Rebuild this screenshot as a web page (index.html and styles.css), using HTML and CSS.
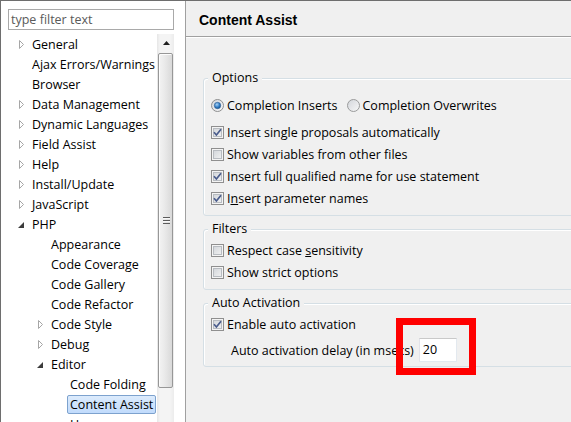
FILE: index.html
```html
<!DOCTYPE html>
<html>
<head>
<meta charset="utf-8">
<title>Preferences - Content Assist</title>
<link rel="stylesheet" href="styles.css">
</head>
<body>
<div class="win">
  <aside class="nav">
    <div class="filter">type filter text</div>
    <div class="treewrap">
      <ul class="tree">
        <li class="row l0"><span class="tw"><svg width="6" height="9" viewBox="0 0 6 9"><path d="M0.5 0.5 L4.5 4.5 L0.5 8.5 Z" fill="#fff" stroke="#a6a6a6"/></svg></span><span class="lbl">General</span></li>
        <li class="row l0"><span class="tw"></span><span class="lbl">Ajax Errors/Warnings</span></li>
        <li class="row l0"><span class="tw"></span><span class="lbl">Browser</span></li>
        <li class="row l0"><span class="tw"><svg width="6" height="9" viewBox="0 0 6 9"><path d="M0.5 0.5 L4.5 4.5 L0.5 8.5 Z" fill="#fff" stroke="#a6a6a6"/></svg></span><span class="lbl">Data Management</span></li>
        <li class="row l0"><span class="tw"><svg width="6" height="9" viewBox="0 0 6 9"><path d="M0.5 0.5 L4.5 4.5 L0.5 8.5 Z" fill="#fff" stroke="#a6a6a6"/></svg></span><span class="lbl">Dynamic Languages</span></li>
        <li class="row l0"><span class="tw"><svg width="6" height="9" viewBox="0 0 6 9"><path d="M0.5 0.5 L4.5 4.5 L0.5 8.5 Z" fill="#fff" stroke="#a6a6a6"/></svg></span><span class="lbl">Field Assist</span></li>
        <li class="row l0"><span class="tw"><svg width="6" height="9" viewBox="0 0 6 9"><path d="M0.5 0.5 L4.5 4.5 L0.5 8.5 Z" fill="#fff" stroke="#a6a6a6"/></svg></span><span class="lbl">Help</span></li>
        <li class="row l0"><span class="tw"><svg width="6" height="9" viewBox="0 0 6 9"><path d="M0.5 0.5 L4.5 4.5 L0.5 8.5 Z" fill="#fff" stroke="#a6a6a6"/></svg></span><span class="lbl">Install/Update</span></li>
        <li class="row l0"><span class="tw"><svg width="6" height="9" viewBox="0 0 6 9"><path d="M0.5 0.5 L4.5 4.5 L0.5 8.5 Z" fill="#fff" stroke="#a6a6a6"/></svg></span><span class="lbl">JavaScript</span></li>
        <li class="row l0"><span class="tw open"><svg width="6" height="6" viewBox="0 0 6 6"><path d="M6 0 L6 6 L0 6 Z" fill="#3c3c3c"/></svg></span><span class="lbl">PHP</span></li>
        <li class="row l1"><span class="tw"></span><span class="lbl">Appearance</span></li>
        <li class="row l1"><span class="tw"></span><span class="lbl">Code Coverage</span></li>
        <li class="row l1"><span class="tw"></span><span class="lbl">Code Gallery</span></li>
        <li class="row l1"><span class="tw"></span><span class="lbl">Code Refactor</span></li>
        <li class="row l1"><span class="tw"><svg width="6" height="9" viewBox="0 0 6 9"><path d="M0.5 0.5 L4.5 4.5 L0.5 8.5 Z" fill="#fff" stroke="#a6a6a6"/></svg></span><span class="lbl">Code Style</span></li>
        <li class="row l1"><span class="tw"><svg width="6" height="9" viewBox="0 0 6 9"><path d="M0.5 0.5 L4.5 4.5 L0.5 8.5 Z" fill="#fff" stroke="#a6a6a6"/></svg></span><span class="lbl">Debug</span></li>
        <li class="row l1"><span class="tw open"><svg width="6" height="6" viewBox="0 0 6 6"><path d="M6 0 L6 6 L0 6 Z" fill="#3c3c3c"/></svg></span><span class="lbl">Editor</span></li>
        <li class="row l2"><span class="tw"></span><span class="lbl">Code Folding</span></li>
        <li class="row l2"><span class="tw"></span><span class="lbl sel">Content Assist</span></li>
        <li class="row l2"><span class="tw"></span><span class="lbl">Hovers</span></li>
      </ul>
      <div class="vscroll">
        <div class="sb-up"><svg width="7" height="4" viewBox="0 0 7 4"><path d="M0 4 L3.5 0 L7 4 Z" fill="#202020"/></svg></div>
        <div class="thumb"><span class="grip"></span></div>
      </div>
    </div>
  </aside>
  <div class="sep"></div>
  <main class="page">
    <header class="ph">Content Assist</header>
    <div class="pbody">
      <fieldset class="grp g-opt">
        <legend>Options</legend>
        <div class="opt radios">
          <span class="rb"><svg width="13" height="13" viewBox="0 0 13 13"><defs><linearGradient id="rbg" x1="0" y1="0" x2="1" y2="1"><stop offset="0" stop-color="#d2d5da"/><stop offset="1" stop-color="#f8f8f8"/></linearGradient><radialGradient id="rdot" cx="0.4" cy="0.35" r="0.7"><stop offset="0" stop-color="#a9d3f5"/><stop offset="0.6" stop-color="#2f7bc4"/><stop offset="1" stop-color="#134f8a"/></radialGradient></defs><circle cx="6.5" cy="6.5" r="6" fill="url(#rbg)" stroke="#8e8f8f"/><circle cx="6.5" cy="6.5" r="3.2" fill="url(#rdot)" stroke="#2b5c91" stroke-width="0.6"/></svg></span>
          <span class="txt">Completion Inserts</span>
          <span class="rb second"><svg width="13" height="13" viewBox="0 0 13 13"><circle cx="6.5" cy="6.5" r="6" fill="url(#rbg)" stroke="#9a9b9b"/></svg></span>
          <span class="txt">Completion Overwrites</span>
        </div>
        <div class="opt first-cb"><span class="cb"><svg width="11" height="11" viewBox="0 0 11 11"><path d="M2 5.3 L4.4 8 L9 2.2" fill="none" stroke="#4a5c8c" stroke-width="1.7"/></svg></span><span class="txt">Insert single proposals automatically</span></div>
        <div class="opt"><span class="cb"></span><span class="txt">Show variables from other files</span></div>
        <div class="opt"><span class="cb"><svg width="11" height="11" viewBox="0 0 11 11"><path d="M2 5.3 L4.4 8 L9 2.2" fill="none" stroke="#4a5c8c" stroke-width="1.7"/></svg></span><span class="txt">Insert full qualified name for use statement</span></div>
        <div class="opt"><span class="cb"><svg width="11" height="11" viewBox="0 0 11 11"><path d="M2 5.3 L4.4 8 L9 2.2" fill="none" stroke="#4a5c8c" stroke-width="1.7"/></svg></span><span class="txt">I<u>n</u>sert parameter names</span></div>
      </fieldset>
      <fieldset class="grp g-filt">
        <legend>Filters</legend>
        <div class="opt first-row"><span class="cb"></span><span class="txt">Respect case <u>s</u>ensitivity</span></div>
        <div class="opt"><span class="cb"></span><span class="txt">Show strict options</span></div>
      </fieldset>
      <fieldset class="grp g-auto">
        <legend>Auto Activation</legend>
        <div class="opt first-row"><span class="cb"><svg width="11" height="11" viewBox="0 0 11 11"><path d="M2 5.3 L4.4 8 L9 2.2" fill="none" stroke="#4a5c8c" stroke-width="1.7"/></svg></span><span class="txt">Enable auto activation</span></div>
        <div class="delay"><span class="txt">Auto activation delay (in msecs)</span><span class="num">20</span></div>
      </fieldset>
    </div>
  </main>
</div>
<div class="mark"></div>
</body>
</html>
```
FILE: styles.css
```css
* { box-sizing: border-box; }
html, body { margin: 0; padding: 0; }
body {
  width: 571px;
  height: 422px;
  overflow: hidden;
  position: relative;
  font-family: "Open Sans", "Noto Sans", sans-serif;
  font-size: 12.5px;
  color: #000;
  background: #f0f0f0;
}
.win {
  display: flex;
  height: 422px;
  border-top: 1px solid #6e6e6e;
}
.nav {
  width: 185px;
  flex: none;
  background: #fff;
  border-left: 1px solid #6e6e6e;
  padding: 8px 11px 0 7px;
  display: flex;
  flex-direction: column;
}
.filter {
  height: 21px;
  border: 1px solid #a9a9a9;
  padding: 0 0 0 2px;
  line-height: 19px;
  color: #5a5a5a;
  margin-bottom: 4px;
}
.treewrap {
  display: flex;
  flex: 1;
  min-height: 0;
}
.tree {
  list-style: none;
  margin: 0;
  padding: 0;
  flex: 1;
  overflow: hidden;
}
.row {
  height: 20px;
  display: flex;
  align-items: center;
  white-space: nowrap;
}
.l0 { padding-left: 11px; }
.l1 { padding-left: 30px; }
.l2 { padding-left: 49px; }
.tw {
  width: 13px;
  flex: none;
  display: flex;
  align-items: center;
}
.tw svg { display: block; }
.tw.open svg { margin-left: -1px; margin-top: 2px; }
.lbl {
  margin-left: -3px;
  padding: 0 2px;
  border: 1px solid transparent;
  border-radius: 2px;
  line-height: 17px;
}
.lbl.sel {
  border-color: #7da2ce;
  background: linear-gradient(#dcebfc, #c1dbfc);
}
.vscroll {
  width: 17px;
  flex: none;
  background: linear-gradient(to right, #e6e6e6, #f4f4f4 3px, #f4f4f4 13px, #ececec);
  display: flex;
  flex-direction: column;
  align-items: center;
}
.sb-up {
  height: 18px;
  width: 100%;
  display: flex;
  align-items: center;
  justify-content: center;
}
.sb-up svg { display: block; margin-left: 1px; }
.thumb {
  margin-top: 1px;
  width: 15px;
  height: 335px;
  border: 1px solid #979797;
  border-radius: 2px;
  background: linear-gradient(to right, #f3f3f3, #e9e9e9 45%, #d9d9d9);
  box-shadow: inset 1px 1px 0 #fcfcfc;
  display: flex;
  align-items: center;
  justify-content: center;
}
.grip {
  width: 7px;
  height: 7px;
  margin-left: 1px;
  background: repeating-linear-gradient(#5c5c5c 0 1px, #f8f8f8 1px 2px, transparent 2px 3px);
}
.sep {
  width: 1px;
  flex: none;
  background: #a0a0a0;
}
.page {
  flex: 1;
  min-width: 0;
  overflow: hidden;
  background: #f0f0f0;
}
.ph {
  height: 36px;
  border-bottom: 1px solid #a0a0a0;
  box-shadow: 0 1px 0 #fff;
  padding: 3px 0 0 13px;
  display: flex;
  align-items: center;
  font-family: "Liberation Sans", Arial, sans-serif;
  font-weight: bold;
  font-size: 14px;
}
.pbody {
  padding: 33px 0 0 17px;
  width: 900px;
}
.grp {
  margin: 0;
  border: 1px solid #d5dfe5;
  border-radius: 3px;
  padding: 0 0 6px 7px;
  width: 600px;
  box-shadow: inset 1px 1px 0 #fff;
}
.grp legend {
  margin-left: -3px;
  padding: 0 4px;
  line-height: 16px;
  background: #f0f0f0;
}
.g-filt, .g-auto { margin-top: 5px; }
.opt {
  height: 22px;
  display: flex;
  align-items: center;
  white-space: nowrap;
}
.opt .txt { margin-left: 3px; }
.radios { margin-top: 8px; }
.first-cb { margin-top: 5px; }
.first-row { margin-top: 2px; }
.g-auto { padding-bottom: 3px; }
.rb { width: 13px; height: 13px; flex: none; }
.rb svg { display: block; }
.rb.second { margin-left: 9px; }
.cb {
  width: 13px;
  height: 13px;
  flex: none;
  border: 1px solid #8f8f8f;
  background: linear-gradient(135deg, #cdd1d6, #f6f6f6);
  box-shadow: inset 0 0 0 1px #f4f4f4, inset 0 0 0 2px #b8bcc1;
  position: relative;
}
.cb svg { display: block; position: relative; }
.delay {
  margin-top: 2px;
  height: 26px;
  display: flex;
  align-items: center;
  padding-left: 20px;
  white-space: nowrap;
}
.num {
  margin-left: 5px;
  width: 38px;
  height: 24px;
  background: #fff;
  border: 1px solid #e3e9ef;
  border-top-color: #c9c9c9;
  border-left-color: #e2e3ea;
  padding-left: 3px;
  line-height: 22px;
}
.mark {
  position: absolute;
  left: 396px;
  top: 318px;
  width: 80px;
  height: 57px;
  border: 7px solid #ff0000;
}
```
